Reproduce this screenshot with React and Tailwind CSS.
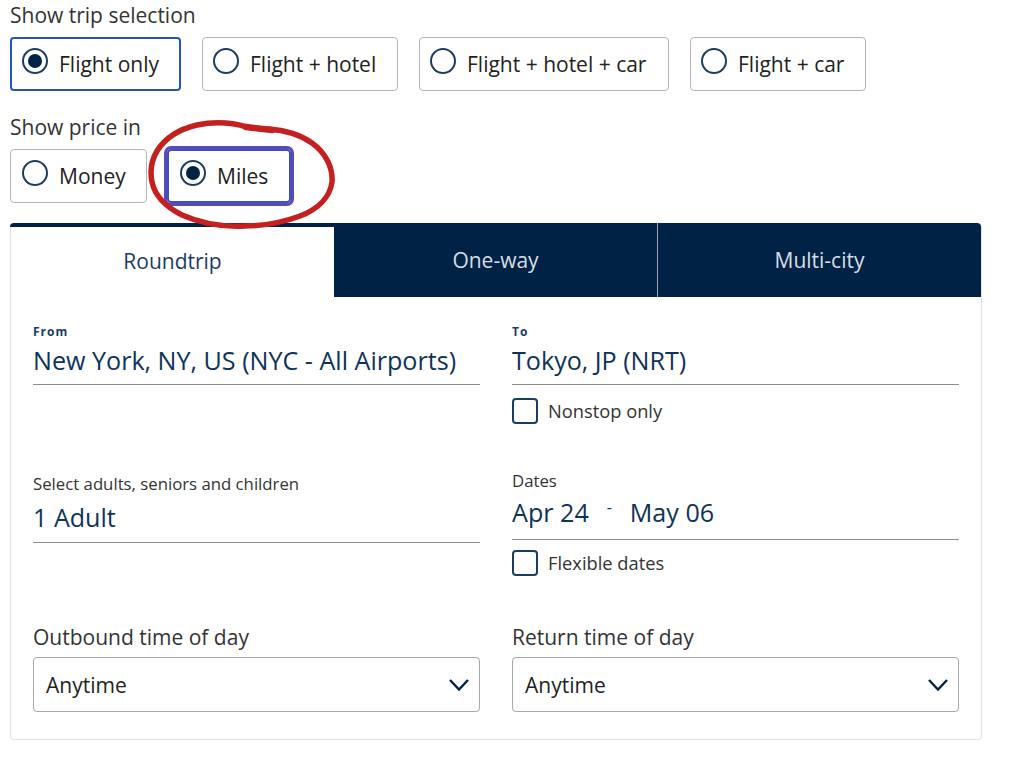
function Radio({ checked }) {
  return (
    <span className="w-[26px] h-[26px] shrink-0 rounded-full border-2 border-[#1b3d63] bg-white flex items-center justify-center">
      {checked && <span className="w-[14px] h-[14px] rounded-full bg-[#002244]" />}
    </span>
  );
}

function Option({ label, width, checked, blue, purple, tight }) {
  const border = purple
    ? "border-2 border-[#3f4fbb] outline-3 outline-[#5a48bd] pl-[11px]"
    : blue
    ? "border-2 border-[#2257b4] pl-[10px]"
    : tight
    ? "border border-[#b4b4b4] pl-[10px]"
    : "border border-[#b4b4b4] pl-[11px]";
  return (
    <div className={`${width} ${border} h-[54px] rounded-[4px] bg-white flex items-center gap-[11px] shrink-0`}>
      <span className="-mt-[6px]"><Radio checked={checked} /></span>
      <span className="text-[21px] leading-[30px] -mt-[1px] text-[#222222]">{label}</span>
    </div>
  );
}

function Check({ label, top }) {
  return (
    <div className={`flex items-center gap-[10px] ${top}`}>
      <span className="w-[26px] h-[26px] rounded-[4px] border-2 border-[#1b3d63] bg-white shrink-0" />
      <span className="text-[18.3px] leading-[26px] text-[#333333]">{label}</span>
    </div>
  );
}

function Select({ label }) {
  return (
    <div>
      <div className="text-[21px] leading-[28px] text-[#333333] h-[28px]">{label}</div>
      <div className="mt-[6px] h-[55px] rounded-[4px] border border-[#a8a8a8] flex items-center justify-between pl-[12px] pr-[9px]">
        <span className="text-[21px] leading-[30px] text-[#222222]">Anytime</span>
        <svg width="22" height="14" viewBox="0 0 22 14" fill="none" stroke="#002244" strokeWidth="2.4">
          <path d="M2 2l9 9.5L20 2" />
        </svg>
      </div>
    </div>
  );
}

function Value({ children }) {
  return <div className="text-[25.12px] leading-[34px] text-[#0f3358] whitespace-nowrap">{children}</div>;
}

export default function App() {
  return (
    <div className="relative w-[1024px] h-[766px] bg-white overflow-hidden px-[10px] font-['Open_Sans',sans-serif]">
      <div className="text-[21px] leading-[30px] text-[#333333]">Show trip selection</div>
      <div className="flex gap-[21px] mt-[7px]">
        <Option label="Flight only" width="w-[171px]" checked blue />
        <Option label="Flight + hotel" width="w-[196px]" tight />
        <Option label="Flight + hotel + car" width="w-[250px]" tight />
        <Option label="Flight + car" width="w-[176px]" tight />
      </div>

      <div className="text-[21px] leading-[30px] text-[#333333] mt-[21px]">Show price in</div>
      <div className="flex gap-[20px] mt-[7px]">
        <Option label="Money" width="w-[137px]" />
        <Option label="Miles" width="w-[124px]" checked purple />
      </div>

      <div className="mt-[20px] w-[972px] h-[517px] rounded-[4px] border border-[#e0e0e0] border-t-0 bg-white">
        <div className="flex h-[74px] -ml-px">
          <div className="w-[324px] border-t-[4px] border-[#002244] rounded-tl-[4px] flex items-center justify-center text-[21px] text-[#1b3d63] pb-[1px] pl-[1px]">
            Roundtrip
          </div>
          <div className="w-[324px] bg-[#002244] flex items-center justify-center text-[21px] text-[#d8dee6] border-r border-[#9aa6b5] pt-[2px]">
            One-way
          </div>
          <div className="flex-1 bg-[#002244] rounded-tr-[4px] flex items-center justify-center text-[21px] text-[#d8dee6] pt-[2px]">
            Multi-city
          </div>
        </div>

        <div className="grid grid-cols-2 gap-x-[32px] px-[22px]">
          <div className="h-[163px] pt-[27px]">
            <div className="text-[12px] leading-[16px] font-bold tracking-[1px] text-[#1b3d63]">From</div>
            <div className="border-b border-[#8c8c8c] h-[45px] pt-[3px]">
              <Value>New York, NY, US (NYC - All Airports)</Value>
            </div>
          </div>
          <div className="h-[163px] pt-[27px]">
            <div className="text-[12px] leading-[16px] font-bold tracking-[1px] text-[#1b3d63]">To</div>
            <div className="border-b border-[#8c8c8c] h-[45px] pt-[3px]">
              <Value>Tokyo, JP (NRT)</Value>
            </div>
            <Check label="Nonstop only" top="mt-[13px]" />
          </div>

          <div className="h-[163px] pt-[11px]">
            <div className="text-[16.75px] leading-[24px] text-[#333333] mt-[1px]">Select adults, seniors and children</div>
            <div className="border-b border-[#8c8c8c] h-[47px] pt-[4px]">
              <Value>1 Adult</Value>
            </div>
          </div>
          <div className="h-[163px] pt-[9px]">
            <div className="text-[16.75px] leading-[24px] text-[#333333]">Dates</div>
            <div className="border-b border-[#8c8c8c] h-[47px] pt-[2px] flex">
              <Value>Apr 24</Value>
              <span className="w-[41px] text-center text-[16px] leading-[24px] text-[#0f3358]">-</span>
              <Value>May 06</Value>
            </div>
            <Check label="Flexible dates" top="mt-[10px]" />
          </div>

          <Select label="Outbound time of day" />
          <Select label="Return time of day" />
        </div>
      </div>

      <svg className="absolute left-0 top-0 pointer-events-none" width="1024" height="766" fill="none">
        <path
          d="M247 127C230 122 212 122 197 125C180 129 165 138 157 151C151 161 150 172 152 182C155 196 166 207 182 215C200 223 222 227 244 226C262 226 284 222 300 216C318 209 330 197 332 182C333 168 326 153 312 143C298 133 283 130 268 129"
          stroke="#c4201f"
          strokeWidth="5.5"
          strokeLinecap="round"
        />
        <path d="M246 127L272 130" stroke="#c4201f" strokeWidth="6.5" strokeLinecap="round" />
      </svg>
    </div>
  );
}
